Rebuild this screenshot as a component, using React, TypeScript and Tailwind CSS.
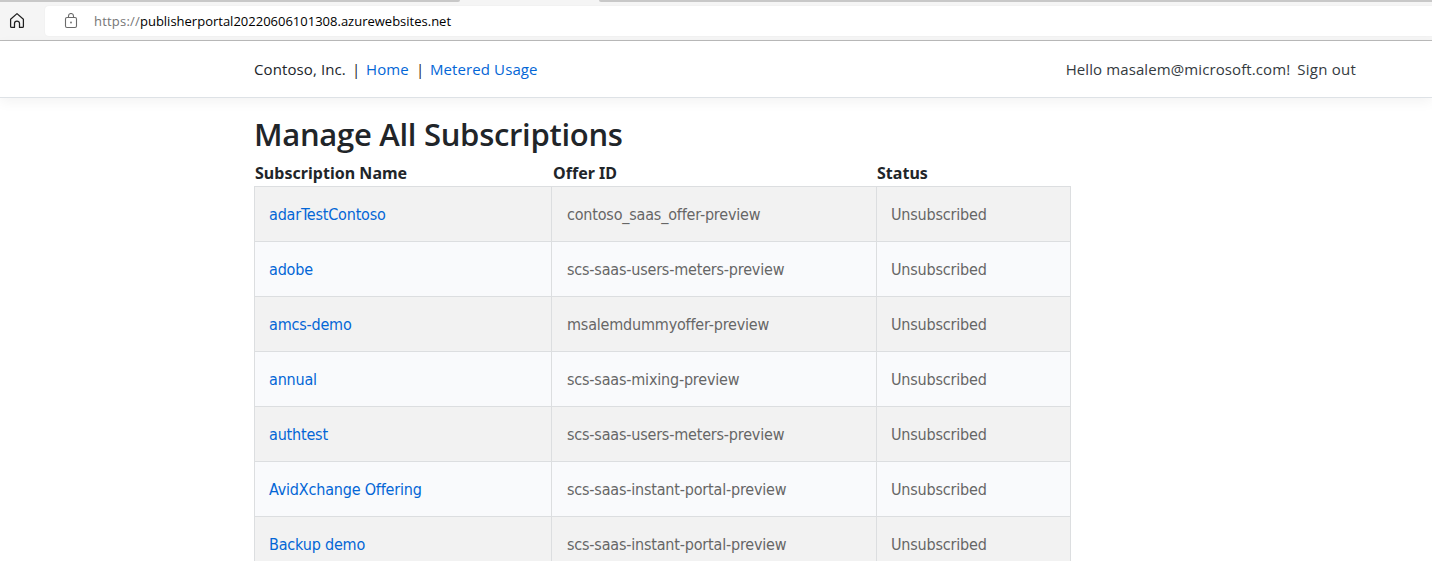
type Subscription = { name: string; offer: string };

const subscriptions: Subscription[] = [
  { name: "adarTestContoso", offer: "contoso_saas_offer-preview" },
  { name: "adobe", offer: "scs-saas-users-meters-preview" },
  { name: "amcs-demo", offer: "msalemdummyoffer-preview" },
  { name: "annual", offer: "scs-saas-mixing-preview" },
  { name: "authtest", offer: "scs-saas-users-meters-preview" },
  { name: "AvidXchange Offering", offer: "scs-saas-instant-portal-preview" },
  { name: "Backup demo", offer: "scs-saas-instant-portal-preview" },
];

function HomeIcon() {
  return (
    <svg width="16" height="17" viewBox="0 0 16 17" fill="none" stroke="#1f1f1f" strokeWidth="1.25" strokeLinejoin="round">
      <path d="M1.6 7.2 8 1.6l6.4 5.6v7.2q0 1-1 1h-2.9v-3.9a2.5 2.5 0 0 0-5 0v3.9H2.6q-1 0-1-1Z" />
    </svg>
  );
}

function LockIcon() {
  return (
    <svg width="14" height="16" viewBox="0 0 14 16" fill="none" stroke="#6b6b6b" strokeWidth="1.1">
      <rect x="1.5" y="4.5" width="11" height="10" rx="1.5" />
      <path d="M4.5 4.5V3a2.5 2.5 0 0 1 5 0v1.5" />
      <circle cx="7" cy="9.5" r="0.9" fill="#6b6b6b" stroke="none" />
    </svg>
  );
}

function BrowserBar() {
  return (
    <div className="flex h-[41px] flex-col border-b border-[#bababa] bg-[#f5f5f5]">
      <div className="flex h-[2px] justify-between">
        <div className="w-[460px] rounded-br-sm bg-[#c8c8c8]" />
        <div className="w-[833px] rounded-bl-sm bg-[#c8c8c8]" />
      </div>
      <div className="flex pt-1">
        <div className="flex w-[45px] pt-[6px] pl-[9px]">
          <HomeIcon />
        </div>
        <div className="flex h-[30px] flex-1 items-center rounded-l-[4px] bg-white pl-[19px] shadow-[0_0_2px_rgba(0,0,0,0.05)]">
          <LockIcon />
          <p className="ml-[16px] text-[13px] leading-[18px] whitespace-nowrap text-black">
            <span className="tracking-[0.2px] text-[#767676]">https://</span>
            <span>publisherportal20220606101308.azurewebsites.net</span>
          </p>
        </div>
      </div>
    </div>
  );
}

function SiteHeader() {
  return (
    <header className="flex h-[57px] items-center border-b border-[#dee2e6] bg-white pr-[76px] pl-[254px] text-[15px] tracking-[0.1px] whitespace-pre text-[#212529] shadow-[0_4px_12px_rgba(0,0,0,0.05)]">
      <span className="w-[98px]">Contoso, Inc.</span>
      <span className="w-[14px]">|</span>
      <a className="w-[50px] text-[#0366d6]">Home</a>
      <span className="w-[14px]">|</span>
      <a className="text-[#0366d6]">Metered Usage</a>
      <span className="ml-auto text-[#343a40]">Hello masalem@microsoft.com!</span>
      <a className="ml-[7px] tracking-[0.24px] text-[#343a40]">Sign out</a>
    </header>
  );
}

export default function App() {
  return (
    <div className="h-[561px] overflow-hidden bg-white font-['Open_Sans',sans-serif]">
      <BrowserBar />
      <SiteHeader />
      <main className="ml-[254px] w-[817px] pt-[17px]">
        <h1 className="h-[48px] text-[31px] leading-[38px] font-semibold tracking-[-0.29px] text-[#212529]">Manage All Subscriptions</h1>
        <div className="font-['DejaVu_Sans_Condensed','DejaVu_Sans',sans-serif] text-base">
          <div className="grid h-[23px] grid-cols-[298px_324px_195px] pl-px font-['Noto_Sans',sans-serif] leading-[20px] font-bold tracking-[0.03px] whitespace-nowrap text-[#212529]">
            <span>Subscription Name</span>
            <span>Offer ID</span>
            <span>Status</span>
          </div>
          {subscriptions.map((s) => (
            <div
              key={s.name}
              className="grid h-[55px] grid-cols-[297px_325px_195px] border-t border-[#dcdee0] tracking-[-0.19px] whitespace-nowrap odd:bg-[#f9fafc] even:bg-[#f2f2f2]"
            >
              <a className="flex items-center border-l border-[#dcdee0] pt-[2px] pl-[14px] text-[#0366d6]">{s.name}</a>
              <span className="flex items-center border-l border-[#dcdee0] pt-[2px] pl-[15px] text-[#666666]">{s.offer}</span>
              <span className="flex items-center border-x border-[#dcdee0] pt-[2px] pl-[14px] text-[#666666]">Unsubscribed</span>
            </div>
          ))}
        </div>
      </main>
    </div>
  );
}
